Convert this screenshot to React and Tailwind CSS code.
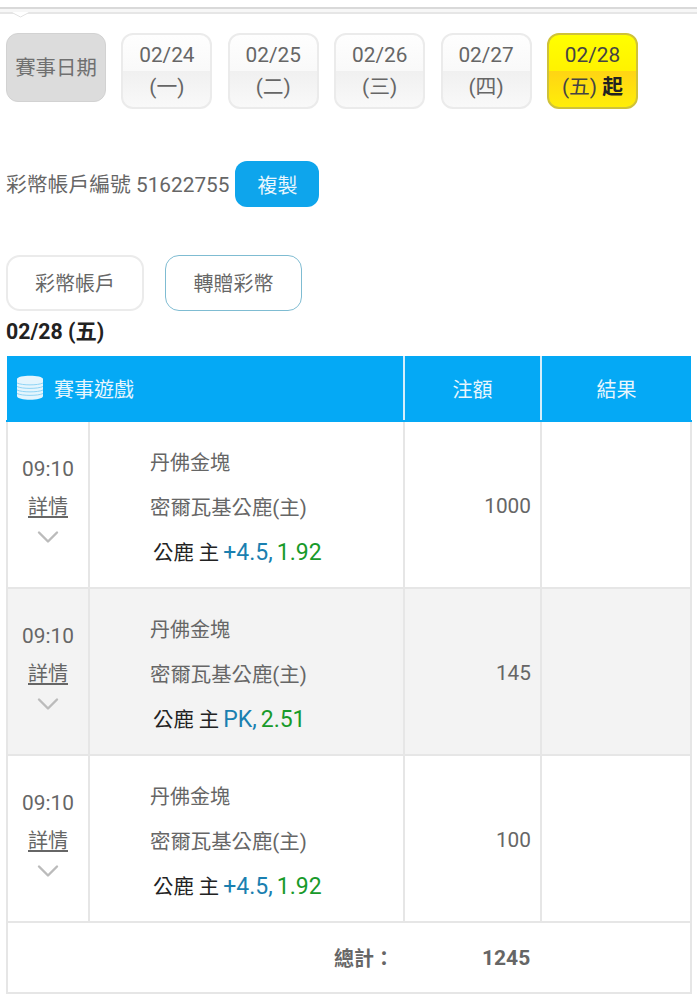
import React from 'react';
import { ChevronDown } from 'lucide-react';

const dates = [
  { date: '02/24', day: '(一)' },
  { date: '02/25', day: '(二)' },
  { date: '02/26', day: '(三)' },
  { date: '02/27', day: '(四)' },
];

const bets = [
  { amount: 1000, line: '+4.5,', odds: '1.92', shaded: false },
  { amount: 145, line: 'PK,', odds: '2.51', shaded: true },
  { amount: 100, line: '+4.5,', odds: '1.92', shaded: false },
];

const font = "font-['Roboto','Noto_Sans_CJK_TC',sans-serif]";

const App = () => {
  return (
    <div className={`${font} relative w-[697px] h-[1000px] overflow-hidden bg-white text-[20.8px] text-[#666]`}>
      <div className="mt-[7px] h-[7px] border-t-2 border-b-2 border-t-[#d9d9d9] border-b-[#e6e6e6] bg-[#f7f7f7]" />
      <svg className="absolute left-[11px] top-[12px]" width="19" height="6" viewBox="0 0 19 6">
        <path d="M0 0 L9.5 5 L19 0" fill="#fff" stroke="#e2e2e2" strokeWidth="1" />
      </svg>

      <div className="mt-[19px] ml-[6px] flex items-start">
        <div className="flex h-[69px] w-[100px] items-center justify-center rounded-[12px] border border-[#d2d2d2] bg-[#dcdcdc] pt-[2px] text-[20.4px] text-[#707070]">
          賽事日期
        </div>
        {dates.map((d) => (
          <div
            key={d.date}
            className="ml-[15.4px] h-[76px] w-[91px] overflow-hidden rounded-[12px] border-2 border-[#ebebeb] bg-[linear-gradient(#fefefe,#f9f9f9_50%,#f0f0f0_50%,#f9f9f9)] pt-[4px] text-center leading-[32px]"
          >
            <div>{d.date}</div>
            <div>{d.day}</div>
          </div>
        ))}
        <div className="ml-[15.4px] h-[76px] w-[91px] overflow-hidden rounded-[12px] border-2 border-[#cfc238] bg-[linear-gradient(#ffff00,#fff200_50%,#ffd414_50%,#ffee08)] pt-[4px] text-center leading-[32px] text-[#444]">
          <div>02/28</div>
          <div>
            (五) <span className="font-bold text-[#222]">起</span>
          </div>
        </div>
      </div>

      <div className="mt-[52px] ml-[6px] flex items-center">
        <span className="pt-[3px]">彩幣帳戶編號 51622755</span>
        <div className="ml-[6px] flex h-[46px] w-[84px] items-center justify-center rounded-[12px] bg-[#0ea5ec] pt-[3px] text-[20px] text-[#e8f6fd]">
          複製
        </div>
      </div>

      <div className="mt-[48px] ml-[6px] flex text-[20px]">
        <div className="flex h-[56px] w-[138px] items-center justify-center rounded-[14px] border-2 border-[#ebebeb] pt-[1px]">
          彩幣帳戶
        </div>
        <div className="ml-[21px] flex h-[56px] w-[137px] items-center justify-center rounded-[14px] border border-[#7fbcd2] pt-[1px]">
          轉贈彩幣
        </div>
      </div>

      <div className="mt-[7px] ml-[6px] h-[30px] text-[21.3px] leading-[28px] font-bold text-[#222]">02/28 (五)</div>

      <table className="mt-[8px] ml-[6px] w-[684px] table-fixed border-collapse">
        <colgroup>
          <col className="w-[82px]" />
          <col className="w-[315px]" />
          <col className="w-[137px]" />
          <col className="w-[150px]" />
        </colgroup>
        <thead>
          <tr className="h-[65px] bg-[#05a9f5] text-[20px] text-[#e8f6fd]">
            <th colSpan={2} className="border-r-2 border-b-2 border-r-[#d5eefb] border-b-[#05a9f5] text-left font-normal">
              <div className="flex items-center pl-[9px]">
                <svg className="mb-[2px]" width="28" height="27" viewBox="0 0 28 27">
                  <path d="M1 5 C1 0.5 27 0.5 27 5 V22 C27 27 1 27 1 22 Z" fill="#e4f5fd" />
                  <path d="M1 9 C6 11.5 22 11.5 27 9 M1 12.5 C6 15 22 15 27 12.5 M1 16 C6 18.5 22 18.5 27 16 M1 19.5 C6 22 22 22 27 19.5" fill="none" stroke="#8fd4f5" strokeWidth="1" />
                </svg>
                <span className="ml-[10px] pt-[3px]">賽事遊戲</span>
              </div>
            </th>
            <th className="border-r-2 border-b-2 border-r-[#d5eefb] border-b-[#05a9f5] pt-[4px] font-normal">注額</th>
            <th className="border-b-2 border-b-[#05a9f5] pt-[4px] font-normal">結果</th>
          </tr>
        </thead>
        <tbody>
          {bets.map((bet, i) => (
            <tr key={i} className={`h-[167px] ${bet.shaded ? 'bg-[#f3f3f3]' : 'bg-white'}`}>
              <td className="border-2 border-t-0 border-[#e6e6e6] text-center align-top">
                <div className="mt-[32px] leading-[30px]">09:10</div>
                <div className="mt-[8px] text-[20px] leading-[30px] underline underline-offset-2">詳情</div>
                <ChevronDown className="mx-auto -mt-[3px]" size={36} color="#bbbbbb" strokeWidth={1.6} />
              </td>
              <td className="border-b-2 border-[#e6e6e6] align-top">
                <div className="mt-[26px] ml-[60px] text-[20px] leading-[30px]">丹佛金塊</div>
                <div className="mt-[15px] ml-[60px] text-[20.4px] leading-[30px] whitespace-nowrap">密爾瓦基公鹿(主)</div>
                <div className="mt-[15px] ml-[63px] flex items-baseline text-[20.4px] leading-[30px] text-[#222] whitespace-nowrap">
                  <span>公鹿 主</span>
                  <span className="ml-[4px] text-[23px] text-[#1a7fb0]">{bet.line}</span>
                  <span className="ml-[4px] text-[23px] text-[#189a2a]">{bet.odds}</span>
                </div>
              </td>
              <td className="border-x-2 border-b-2 border-[#e6e6e6] pr-[9px] pt-[4px] text-right">{bet.amount}</td>
              <td className="border-r-2 border-b-2 border-[#e6e6e6]" />
            </tr>
          ))}
          <tr className="h-[71px]">
            <td colSpan={4} className="border-x-2 border-b-2 border-[#e6e6e6] pt-[2px] font-bold">
              <div className="flex items-center">
                <span className="ml-[326px] w-[148px] text-[20px]">總計：</span>
                <span className="text-[21px]">1245</span>
              </div>
            </td>
          </tr>
        </tbody>
      </table>
    </div>
  );
};

export default App;
